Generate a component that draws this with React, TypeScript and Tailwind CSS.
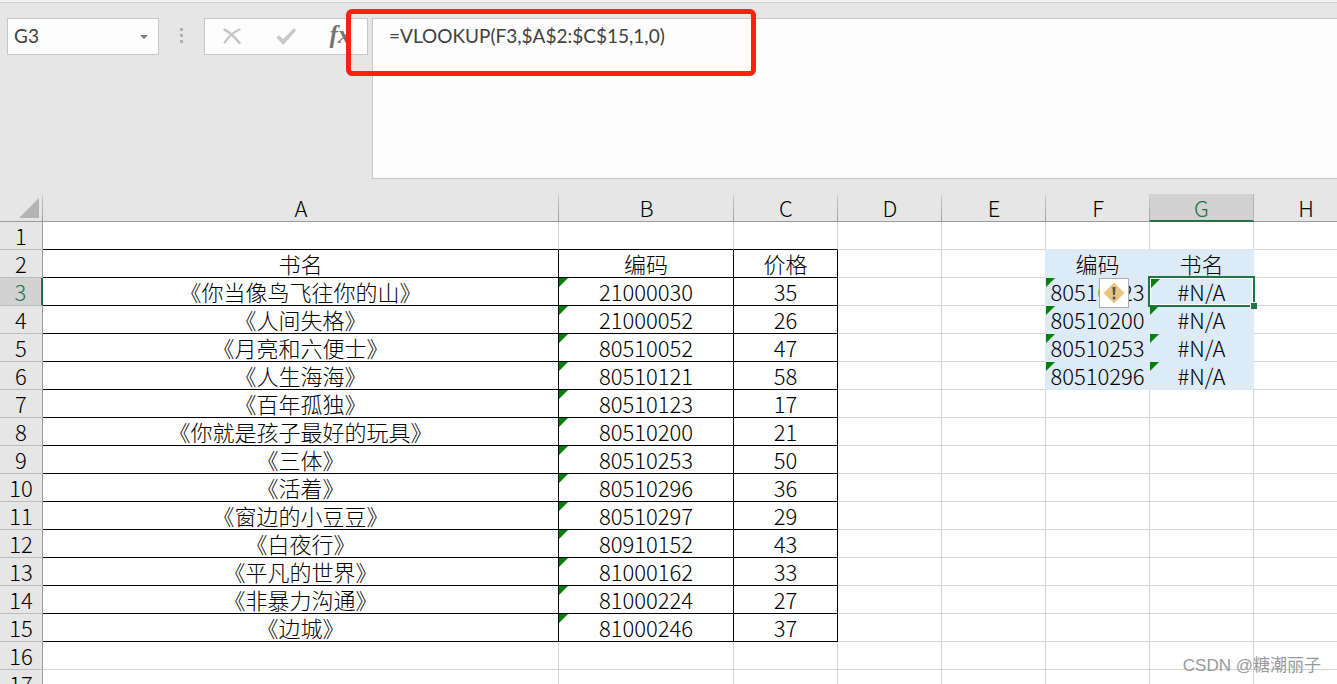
import { useState } from 'react';
import clsx from 'clsx';

const COLUMNS = ['A', 'B', 'C', 'D', 'E', 'F', 'G', 'H'];
const ROW_COUNT = 17;

const books = [
  ['《你当像鸟飞往你的山》', '21000030', '35'],
  ['《人间失格》', '21000052', '26'],
  ['《月亮和六便士》', '80510052', '47'],
  ['《人生海海》', '80510121', '58'],
  ['《百年孤独》', '80510123', '17'],
  ['《你就是孩子最好的玩具》', '80510200', '21'],
  ['《三体》', '80510253', '50'],
  ['《活着》', '80510296', '36'],
  ['《窗边的小豆豆》', '80510297', '29'],
  ['《白夜行》', '80910152', '43'],
  ['《平凡的世界》', '81000162', '33'],
  ['《非暴力沟通》', '81000224', '27'],
  ['《边城》', '81000246', '37'],
];

const lookups = ['80510123', '80510200', '80510253', '80510296'];

function buildCells() {
  const cells: Record<string, string> = { A2: '书名', B2: '编码', C2: '价格', F2: '编码', G2: '书名' };
  books.forEach(([name, code, price], i) => {
    cells[`A${i + 3}`] = name;
    cells[`B${i + 3}`] = code;
    cells[`C${i + 3}`] = price;
  });
  lookups.forEach((code, i) => {
    cells[`F${i + 3}`] = code;
    cells[`G${i + 3}`] = '#N/A';
  });
  return cells;
}

const cells = buildCells();

// numbers stored as text and formula errors get the green corner
const isFlagged = (col: string, row: number) =>
  (col === 'B' && row >= 3 && row <= 15) || ((col === 'F' || col === 'G') && row >= 3 && row <= 6);

const isFilled = (col: string, row: number) => (col === 'F' || col === 'G') && row >= 2 && row <= 6;

function rightBorder(col: string, row: number) {
  if ('ABC'.includes(col) && row >= 2 && row <= 15) return 'border-r-black';
  if ('EFG'.includes(col) && row >= 2 && row <= 6) return 'border-r-[#ddebf7]';
  return 'border-r-[#d4d4d4]';
}

function bottomBorder(col: string, row: number) {
  if ('ABC'.includes(col) && row <= 15) return 'border-b-black';
  if ('FG'.includes(col) && row <= 6) return 'border-b-[#ddebf7]';
  return 'border-b-[#d4d4d4]';
}

function FormulaBar() {
  const [name, setName] = useState('G3');
  const [formula, setFormula] = useState('=VLOOKUP(F3,$A$2:$C$15,1,0)');

  return (
    <header className="relative flex items-start border-t-2 border-[#f3f3f3] font-[Lato,'Noto_Sans_CJK_SC',sans-serif] text-[#404040]">
      <div className="flex w-full items-start border-t border-[#d0d0d0] pt-[15px] pb-[15px] pl-[7px]">
        <div className="flex h-[37px] w-[152px] items-center border border-[#c6c6c6] bg-[#fdfdfd]">
          <input
            aria-label="Name box"
            value={name}
            onChange={(e) => setName(e.target.value)}
            className="w-[122px] pl-[6px] text-[19px] outline-none"
          />
          <button type="button" aria-label="Name list" className="flex h-full flex-1 items-center justify-center">
            <svg width="8" height="4" viewBox="0 0 8 4">
              <path d="M0 0h8L4 4z" fill="#7a7a7a" />
            </svg>
          </button>
        </div>

        <div className="mr-px flex h-[35px] w-[44px] flex-col items-center justify-center gap-[3px]">
          <span className="size-[3px] bg-[#b0b0b0]" />
          <span className="size-[3px] bg-[#b0b0b0]" />
          <span className="size-[3px] bg-[#b0b0b0]" />
        </div>

        <div className="grid h-[37px] w-[164px] grid-cols-3 border border-[#c6c6c6] bg-[#fdfdfd]">
          <button type="button" aria-label="Cancel" className="flex items-center justify-center pb-px">
            <svg width="18" height="16" viewBox="0 0 18 16" fill="none" stroke="#c6c6c6" strokeLinecap="round">
              <path d="M1.6 1.6C6 4 12 9.5 16.500 15" strokeWidth="2.6" />
              <path d="M16.500 1.5C11 4 5 9.5 1.6 14.5" strokeWidth="2.2" />
            </svg>
          </button>
          <button type="button" aria-label="Enter" className="flex items-center justify-center">
            <svg width="20" height="17" viewBox="0 0 20 17">
              <path d="M.5 9.500 3 7.500l4 3.500L17.500.800h2V3L7.800 16.500H6.500z" fill="#c8c8c8" />
            </svg>
          </button>
          <button
            type="button"
            aria-label="Insert function"
            className="pb-1 font-['Liberation_Serif',serif] text-[25px] leading-none font-bold text-[#737373] italic"
          >
            fx
          </button>
        </div>

        <textarea
          aria-label="Formula"
          value={formula}
          onChange={(e) => setFormula(e.target.value)}
          className="ml-1 h-[161px] min-w-0 flex-1 resize-none border border-r-0 border-[#c6c6c6] bg-[#fdfdfd] px-4 py-[5px] text-[19px] leading-6 outline-none"
        />
      </div>
      <div className="pointer-events-none absolute top-[7px] left-[346px] h-[67px] w-[410px] rounded-md border-5 border-[#ff2012]" />
    </header>
  );
}

function ErrorButton() {
  return (
    <button
      type="button"
      aria-label="Error options"
      className="absolute top-0 right-5 z-10 flex size-[30px] items-center justify-center border border-[#ababab] bg-white"
    >
      <svg width="22" height="22" viewBox="0 0 22 22">
        <path d="M11 .5 21.500 11 11 21.500.500 11z" fill="#eac282" />
        <path d="M9.500 5h3l-.5 8h-2z" fill="#555" />
        <circle cx="11" cy="16" r="1.500" fill="#555" />
      </svg>
    </button>
  );
}

function Cell({ col, row }: { col: string; row: number }) {
  const selected = col === 'G' && row === 3;
  return (
    <td
      className={clsx(
        'relative h-7 border-r border-b p-0 text-center whitespace-nowrap',
        rightBorder(col, row),
        bottomBorder(col, row),
        isFilled(col, row) && 'bg-[#ddebf7]',
      )}
    >
      {cells[`${col}${row}`]}
      {selected && (
        <div className="absolute -inset-[2px] z-10 border-2 border-[#217346]">
          <div className="size-full border border-white" />
          <div className="absolute -right-[4px] -bottom-[4px] size-[7px] border-t border-l border-white bg-[#217346]" />
        </div>
      )}
      {isFlagged(col, row) && (
        <svg
          className={clsx('absolute', selected ? 'top-px left-px z-10' : 'top-0 left-0')}
          width="9"
          height="9"
          viewBox="0 0 9 9"
        >
          <path d="M0 0h9L0 9z" fill="#008000" />
        </svg>
      )}
      {col === 'F' && row === 3 && <ErrorButton />}
    </td>
  );
}

function Sheet() {
  return (
    <main className="min-h-0 flex-1 overflow-hidden bg-white">
      <table className="w-[1358px] min-w-full table-fixed border-separate border-spacing-0 font-['Noto_Sans_CJK_SC',sans-serif] text-[22px] leading-[27px] font-light text-black">
        <colgroup>
          <col className="w-[43px]" />
          <col className="w-[516px]" />
          <col className="w-[175px]" />
          <col className="w-[104px]" />
          <col className="w-[104px]" />
          <col className="w-[104px]" />
          <col className="w-[104px]" />
          <col className="w-[104px]" />
          <col />
        </colgroup>
        <thead>
          <tr className="bg-[#e6e6e6]">
            <th className="h-7 border-b border-[#9b9b9b] bg-[linear-gradient(#d0d0d0,#999)] bg-[length:1px_100%] bg-right bg-no-repeat p-0 align-top">
              <svg className="mt-1 ml-[19px]" width="20" height="20" viewBox="0 0 20 20" role="img" aria-label="Select all">
                <path d="M20 0v20H0z" fill="#b4b4b4" />
              </svg>
            </th>
            {COLUMNS.map((col) => (
              <th
                key={col}
                scope="col"
                className={clsx(
                  'h-7 p-0 pt-px align-top leading-[25px] font-light',
                  col === 'G'
                    ? 'border-r border-b-2 border-r-[#b4b4b4] border-b-[#217346] bg-[#d2d2d2] text-[#217346]'
                    : 'border-b border-[#9b9b9b] bg-[linear-gradient(#d0d0d0,#999)] bg-[length:1px_100%] bg-right bg-no-repeat',
                )}
              >
                {col}
              </th>
            ))}
          </tr>
        </thead>
        <tbody>
          {Array.from({ length: ROW_COUNT }, (_, i) => i + 1).map((row) => (
            <tr key={row}>
              <th
                scope="row"
                className={clsx(
                  'h-7 border-b border-b-[#bdbdbd] p-0 font-light',
                  row === 3
                    ? 'border-r-2 border-r-[#217346] bg-[#d2d2d2] text-[#217346]'
                    : 'border-r border-r-[#9b9b9b] bg-[#e6e6e6]',
                )}
              >
                {row}
              </th>
              {COLUMNS.map((col) => (
                <Cell key={col} col={col} row={row} />
              ))}
            </tr>
          ))}
        </tbody>
      </table>
    </main>
  );
}

export default function App() {
  return (
    <div className="relative flex h-screen flex-col overflow-hidden bg-[#e6e6e6]">
      <FormulaBar />
      <Sheet />
      <p className="absolute right-4 bottom-1 font-['Liberation_Sans','Noto_Sans_CJK_SC',sans-serif] text-[17px] leading-7 text-[#999]">
        CSDN @糖潮丽子
      </p>
    </div>
  );
}
